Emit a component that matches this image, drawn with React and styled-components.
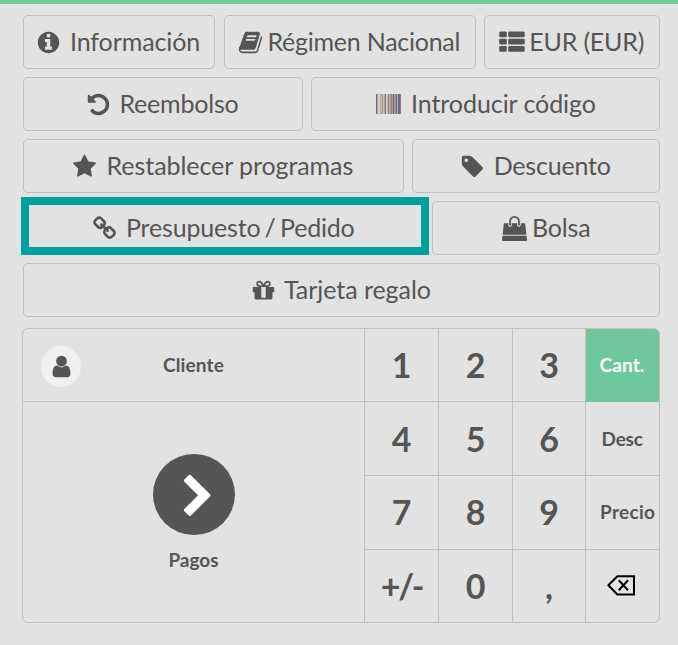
import React from 'react';
import styled, { createGlobalStyle } from 'styled-components';

const INK = '#555';
const LINE = '#bfbfbf';
const GREEN = '#6ec89b';
const TEAL = '#00a09d';

const GlobalStyle = createGlobalStyle`
  * { box-sizing: border-box; }
  body {
    margin: 0;
    background: #e2e2e2;
    color: ${INK};
    font-family: Lato, "Open Sans", sans-serif;
  }
  button {
    margin: 0;
    padding: 0;
    border: 0;
    background: none;
    color: inherit;
    font: inherit;
  }
`;

const Screen = styled.main`
  height: 645px;
  overflow: hidden;
  border-top: 4px solid ${GREEN};
  padding: 11px 18px 0 22px;
`;

const Controls = styled.div`
  display: flex;
  flex-direction: column;
  gap: 8px;
  padding-left: 1px;
`;

const ControlRow = styled.div`
  display: grid;
  grid-template-columns: ${(p) => p.$columns};
  justify-content: space-between;
  height: 54px;
`;

const ControlButton = styled.button`
  display: flex;
  align-items: center;
  padding-left: ${(p) => p.$inset}px;
  border: 1px solid ${LINE};
  border-radius: 5px;
  font-size: 25px;
  line-height: 30px;
  white-space: nowrap;
  ${(p) =>
    p.$highlighted &&
    `
    margin: -4px 0 0 -2px;
    padding-top: 4px;
    border: 8px solid ${TEAL};
    border-radius: 0;
  `}
`;

const Label = styled.span`
  margin: -2px 0 0 ${(p) => p.$gap}px;
  letter-spacing: ${(p) => p.$tracking}px;
  word-spacing: ${(p) => p.$wordGap}px;
`;

const Glyph = styled.svg`
  display: block;
  flex: none;
  width: ${(p) => p.$w}px;
  height: ${(p) => p.$h}px;
  fill: currentColor;
`;

const Pads = styled.div`
  display: grid;
  grid-template-columns: 341px 296px;
  width: 638px;
  height: 295px;
  margin-top: 11px;
  border: 1px solid ${LINE};
  border-radius: 6px;
  overflow: hidden;
`;

const ActionPad = styled.div`
  display: grid;
  grid-template-rows: 73px 220px;
`;

const CustomerButton = styled.button`
  display: grid;
  grid-template-columns: 40px 1fr;
  align-items: center;
  padding-left: 18px;
  border-bottom: 1px solid ${LINE};
  font-size: 19px;
  font-weight: 700;
`;

const Avatar = styled.span`
  display: flex;
  align-items: center;
  justify-content: center;
  width: 40px;
  height: 41px;
  margin-top: 3px;
  padding-bottom: 1px;
  border-radius: 50%;
  background: #f0f0f0;
`;

const CustomerName = styled.span`
  padding: 0 58px 2px 0;
  text-align: center;
  letter-spacing: 0.15px;
`;

const PayButton = styled.button`
  display: flex;
  flex-direction: column;
  align-items: center;
  padding-top: 52px;
  font-size: 19px;
  font-weight: 700;
  line-height: 24px;
`;

const PayCircle = styled.span`
  display: flex;
  align-items: center;
  justify-content: center;
  width: 82px;
  height: 81px;
  margin-bottom: 13px;
  padding: 4px 0 0 8px;
  border-radius: 50%;
  background: ${INK};
  color: #fff;
`;

const Numpad = styled.div`
  display: grid;
  grid-template-columns: 74px 74px 73px 75px;
  grid-template-rows: 73px 74px 74px 72px;
`;

const Key = styled.button`
  display: flex;
  align-items: center;
  justify-content: center;
  padding-top: ${(p) => p.$drop || 0}px;
  padding-bottom: 2px;
  border-left: 1px solid ${LINE};
  border-bottom: 1px solid ${(p) => (p.$last ? 'transparent' : LINE)};
  font-size: 34px;
  font-weight: 700;
  letter-spacing: ${(p) => p.$tracking || 0}px;
`;

const ModeKey = styled(Key)`
  justify-content: flex-start;
  padding-left: ${(p) => p.$inset}px;
  font-size: 19px;
  ${(p) =>
    p.$selected &&
    `
    background: ${GREEN};
    border-bottom-color: ${GREEN};
    color: #fff;
  `}
`;

const PATHS = {
  info: 'M1152 1376v-160q0-14-9-23t-23-9h-96v-512q0-14-9-23t-23-9h-320q-14 0-23 9t-9 23v160q0 14 9 23t23 9h96v320h-96q-14 0-23 9t-9 23v160q0 14 9 23t23 9h448q14 0 23-9t9-23zm-128-896v-160q0-14-9-23t-23-9h-192q-14 0-23 9t-9 23v160q0 14 9 23t23 9h192q14 0 23-9t9-23zm640 416q0 209-103 385.5t-279.5 279.5-385.5 103-385.5-103-279.5-279.5-103-385.5 103-385.5 279.5-279.5 385.5-103 385.5 103 279.5 279.5 103 385.5z',
  undo: 'M1664 896q0 156-61 298t-164 245-245 164-298 61q-172 0-327-72.5t-264-204.5q-7-10-6.5-22.5t8.5-20.5l137-138q10-9 25-9 16 2 23 12 73 95 179 147t225 52q104 0 198.5-40.5t163.5-109.5 109.5-163.5 40.5-198.5-40.5-198.5-109.5-163.5-163.5-109.5-198.5-40.5q-98 0-188 35.5t-160 101.5l137 138q31 30 14 69-17 40-59 40h-448q-26 0-45-19t-19-45v-448q0-42 40-59 39-17 69 14l130 129q107-101 244.5-156.5t284.5-55.5q156 0 298 61t245 164 164 245 61 298z',
  star: 'M1728 647q0 22-26 48l-363 354 86 500q1 7 1 20 0 21-10.5 35.5t-30.5 14.5q-19 0-40-12l-449-236-449 236q-22 12-40 12-21 0-31.5-14.5t-10.5-35.5q0-6 2-20l86-500-364-354q-25-27-25-48 0-37 56-46l502-73 225-455q19-41 49-41t49 41l225 455 502 73q56 9 56 46z',
  tag: 'M576 448q0-53-37.5-90.5t-90.5-37.5-90.5 37.5-37.5 90.5 37.5 90.5 90.5 37.5 90.5-37.5 37.5-90.5zm1067 576q0 53-37 90l-491 492q-39 37-91 37-53 0-90-37l-715-716q-38-37-64.5-101t-26.5-117v-416q0-52 38-90t90-38h416q53 0 117 26.5t102 64.5l715 714q37 39 37 91z',
  user: 'M1536 1399q0 109-62.5 187t-150.5 78h-854q-88 0-150.5-78t-62.5-187q0-85 8.5-160.5t31.5-152 58.5-131 94-89 134.5-34.5q131 128 313 128t313-128q76 0 134.5 34.5t94 89 58.5 131 31.5 152 8.5 160.5zm-256-887q0 159-112.5 271.5t-271.5 112.5-271.5-112.5-112.5-271.5 112.5-271.5 271.5-112.5 271.5 112.5 112.5 271.5z',
  chevron: 'M1363 877l-742 742q-19 19-45 19t-45-19l-166-166q-19-19-19-45t19-45l531-531-531-531q-19-19-19-45t19-45l166-166q19-19 45-19t45 19l742 742q19 19 19 45t-19 45z',
  link: 'M1520 1216q0-40-28-68l-208-208q-28-28-68-28-42 0-72 32 3 3 19 18.5t21.5 21.5 15 19 13 25.5 3.5 27.5q0 40-28 68t-68 28q-15 0-27.5-3.5t-25.5-13-19-15-21.5-21.5-18.5-19q-33 31-33 73 0 40 28 68l206 207q27 27 68 27 40 0 68-26l147-146q28-28 28-67zm-703-705q0-40-28-68l-206-207q-28-28-68-28-39 0-68 27l-147 146q-28 28-28 67 0 40 28 68l208 208q27 27 68 27 42 0 72-31-3-3-19-18.5t-21.5-21.5-15-19-13-25.5-3.5-27.5q0-40 28-68t68-28q15 0 27.5 3.5t25.5 13 19 15 21.5 21.5 18.5 19q33-31 33-73zm895 705q0 120-85 203l-147 146q-83 83-203 83-121 0-204-85l-206-207q-83-83-83-203 0-123 88-209l-88-88q-86 88-208 88-120 0-204-84l-208-208q-84-84-84-204t85-203l147-146q83-83 203-83 121 0 204 85l206 207q83 83 83 203 0 123-88 209l88 88q86-88 208-88 120 0 204 84l208 208q84 84 84 204z',
  book: 'M1703 478q40 57 18 129l-275 906q-19 64-76.5 107.5t-122.5 43.5h-923q-77 0-148.5-53.5t-99.5-131.5q-24-67-2-127 0-4 3-27t4-37q1-8-3-21.5t-3-19.5q2-11 8-21t16.5-23.5 16.5-23.5q23-38 45-91.5t30-91.5q3-10 .5-30t-.5-28q3-11 17-28t17-23q21-36 42-92t25-90q1-9-2.5-32t.5-28q4-13 22-30.5t22-22.5q19-26 42.5-84.5t27.5-96.5q1-8-3-25.5t-2-26.5q2-8 9-18t18-23 17-21q8-12 16.5-30.5t15-35 16-36 19.5-32 26.5-23.5 36-11.5 47.5 5.5l-1 3q38-9 51-9h761q74 0 114 56t18 130l-274 906q-36 119-71.5 153.5t-128.5 34.5h-869q-27 0-38 15-11 16-1 43 24 70 144 70h923q29 0 56-15.5t35-41.5l300-987q7-22 5-57 38 15 59 43zm-1064 2q-4 13 2 22.5t20 9.5h608q13 0 25.5-9.5t16.5-22.5l21-64q4-13-2-22.5t-20-9.5h-608q-13 0-25.5 9.5t-16.5 22.5zm-83 256q-4 13 2 22.5t20 9.5h608q13 0 25.5-9.5t16.5-22.5l21-64q4-13-2-22.5t-20-9.5h-608q-13 0-25.5 9.5t-16.5 22.5z',
  gift: 'M1056 1356v-716h-320v716q0 25 18 38.5t46 13.5h192q28 0 46-13.5t18-38.5zm-456-844h195l-126-161q-26-31-69-31-40 0-68 28t-28 68 28 68 68 28zm688-96q0-40-28-68t-68-28q-43 0-69 31l-125 161h194q40 0 68-28t28-68zm376 256v320q0 14-9 23t-23 9h-96v416q0 40-28 68t-68 28h-1088q-40 0-68-28t-28-68v-416h-96q-14 0-23-9t-9-23v-320q0-14 9-23t23-9h440q-93 0-158.5-65.5t-65.5-158.5 65.5-158.5 158.5-65.5q107 0 168 77l128 165 128-165q61-77 168-77 93 0 158.5 65.5t65.5 158.5-65.5 158.5-158.5 65.5h440q14 0 23 9t9 23z',
  bag: 'M1757 1408l35 313q3 28-16 50-19 21-48 21h-1664q-29 0-48-21-19-22-16-50l35-313h1722zm-93-839l86 775h-1708l86-775q3-24 21-40.5t43-16.5h256v128q0 53 37.5 90.5t90.5 37.5 90.5-37.5 37.5-90.5v-128h384v128q0 53 37.5 90.5t90.5 37.5 90.5-37.5 37.5-90.5v-128h256q25 0 43 16.5t21 40.5zm-384-185v256q0 26-19 45t-45 19-45-19-19-45v-256q0-106-75-181t-181-75-181 75-75 181v256q0 26-19 45t-45 19-45-19-19-45v-256q0-159 112.5-271.5t271.5-112.5 271.5 112.5 112.5 271.5z',
};

function Icon({ name, size = 25 }) {
  return (
    <Glyph $w={size} $h={size} viewBox="0 0 1792 1792" aria-hidden="true">
      <path d={PATHS[name]} />
    </Glyph>
  );
}

function ListIcon() {
  return (
    <Glyph $w={26} $h={25} viewBox="0 0 26 25" aria-hidden="true">
      {[1.6, 8.8, 16].map((y) => (
        <React.Fragment key={y}>
          <rect x="0.2" y={y} width="7.6" height="5.7" rx="1.3" />
          <rect x="9.2" y={y} width="16.5" height="5.7" rx="1.3" />
        </React.Fragment>
      ))}
    </Glyph>
  );
}

const BARS = ['#77698c', '#a99fb0', '#d3d3d3', '#dccf9f', '#9fb4c8', '#d2b183', '#c98f62', '#a9cbdc', '#c9a183', '#77759a', '#dccdb4', '#a5c3d3', '#b57f5c', '#a9b0b0', '#d39c66', '#7888ad', '#c99873', '#75658c', '#c79069', '#7fa5c4', '#7d6078', '#8fc0d0', '#5f7090', '#6d6c94', '#9d6f86'];

function BarcodeIcon() {
  return (
    <Glyph $w={25} $h={20} viewBox="0 0 25 20" shapeRendering="crispEdges" aria-hidden="true">
      {BARS.map((color, x) => (
        <rect key={x} x={x} y="0" width="1" height="20" fill={color} />
      ))}
    </Glyph>
  );
}

function BackspaceIcon() {
  return (
    <Glyph $w={29} $h={21} viewBox="0 0 29 21" aria-hidden="true">
      <path
        d="M1.4 10.3 10.3 1.2H27v18.3H10.3Z M11.8 5.2 21 15.2 M21 5.2 11.8 15.2"
        fill="none"
        stroke="#000"
        strokeWidth="2"
      />
    </Glyph>
  );
}

function Control({ icon, text, inset, gap, tracking = 0, wordGap = 0, highlighted }) {
  return (
    <ControlButton $inset={inset} $highlighted={highlighted}>
      {icon}
      <Label $gap={gap} $tracking={tracking} $wordGap={wordGap}>
        {text}
      </Label>
    </ControlButton>
  );
}

export default function App() {
  return (
    <>
      <GlobalStyle />
      <Screen>
        <Controls>
          <ControlRow $columns="192px 252px 176px">
            <Control icon={<Icon name="info" />} text="Información" inset={12.4} gap={8.6} tracking={-0.1} />
            <Control icon={<Icon name="book" />} text="Régimen Nacional" inset={13} gap={5} tracking={-0.25} />
            <Control icon={<ListIcon />} text="EUR (EUR)" inset={14} gap={4.3} tracking={-0.2} />
          </ControlRow>
          <ControlRow $columns="280px 349px">
            <Control icon={<Icon name="undo" />} text="Reembolso" inset={62} gap={8.4} tracking={-0.2} />
            <Control icon={<BarcodeIcon />} text="Introducir código" inset={64} gap={10} tracking={-0.07} />
          </ControlRow>
          <ControlRow $columns="381px 248px">
            <Control icon={<Icon name="star" />} text="Restablecer programas" inset={48.3} gap={9.3} tracking={-0.07} />
            <Control icon={<Icon name="tag" />} text="Descuento" inset={47.3} gap={8.4} tracking={-0.2} />
          </ControlRow>
          <ControlRow $columns="406px 228px">
            <Control
              icon={<Icon name="link" />}
              text="Presupuesto / Pedido"
              inset={63}
              gap={9}
              tracking={-0.18}
              wordGap={-2}
              highlighted
            />
            <Control icon={<Icon name="bag" />} text="Bolsa" inset={69} gap={5} tracking={-0.15} />
          </ControlRow>
          <ControlRow $columns="637px">
            <Control icon={<Icon name="gift" />} text="Tarjeta regalo" inset={226.6} gap={8.4} tracking={-0.05} />
          </ControlRow>
        </Controls>
        <Pads>
          <ActionPad>
            <CustomerButton>
              <Avatar>
                <Icon name="user" />
              </Avatar>
              <CustomerName>Cliente</CustomerName>
            </CustomerButton>
            <PayButton>
              <PayCircle>
                <Icon name="chevron" size={46} />
              </PayCircle>
              Pagos
            </PayButton>
          </ActionPad>
          <Numpad>
            <Key>1</Key>
            <Key>2</Key>
            <Key>3</Key>
            <ModeKey $inset={13.6} $tracking={0.1} $selected>
              Cant.
            </ModeKey>
            <Key $drop={2}>4</Key>
            <Key $drop={2}>5</Key>
            <Key $drop={2}>6</Key>
            <ModeKey $inset={15.5} $drop={2} $tracking={-0.2}>
              Desc
            </ModeKey>
            <Key>7</Key>
            <Key>8</Key>
            <Key>9</Key>
            <ModeKey $inset={14} $tracking={0.3}>
              Precio
            </ModeKey>
            <Key $last $drop={2} $tracking={-2.2}>
              +/-
            </Key>
            <Key $last $drop={2}>
              0
            </Key>
            <Key $last $drop={2}>
              ,
            </Key>
            <ModeKey $inset={21} $last $drop={1} aria-label="Borrar">
              <BackspaceIcon />
            </ModeKey>
          </Numpad>
        </Pads>
      </Screen>
    </>
  );
}
